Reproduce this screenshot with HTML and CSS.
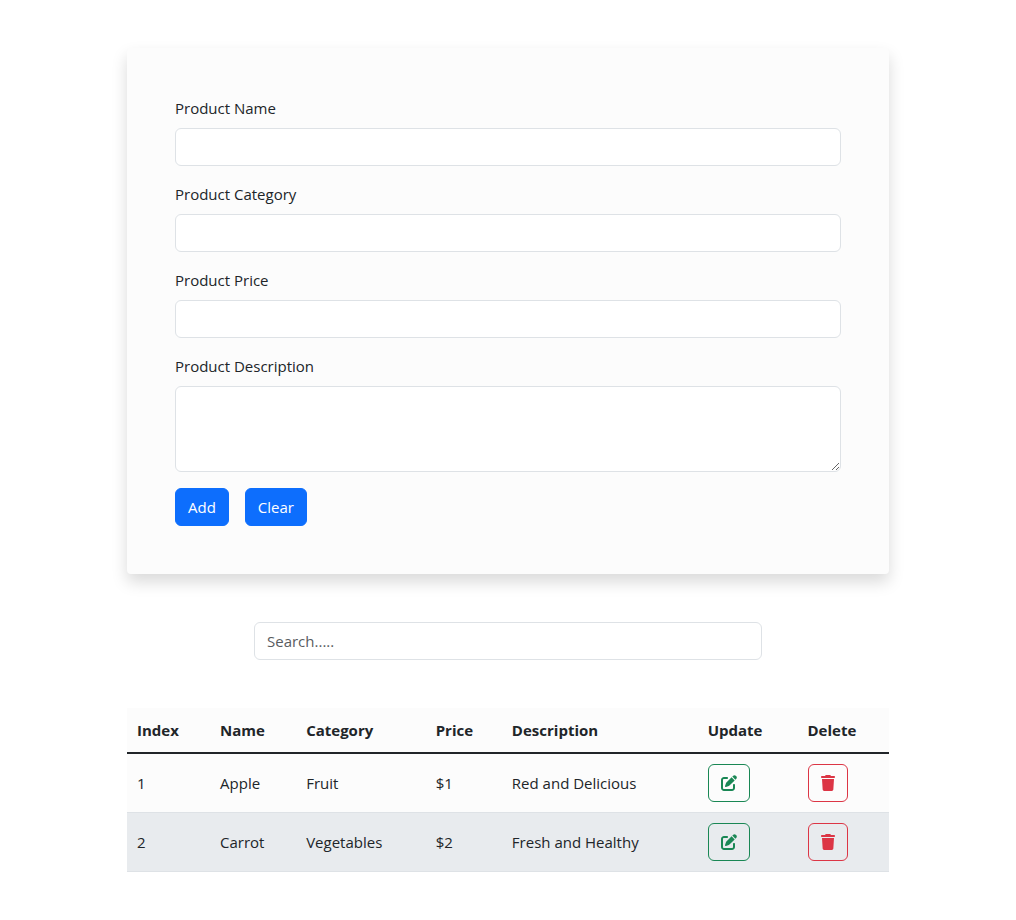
FILE: index.html
```html
<!DOCTYPE html>
<html lang="en">
<head>
  <meta charset="utf-8">
  <meta name="viewport" content="width=device-width, initial-scale=1">
  <title>Products</title>
  <link rel="stylesheet" href="styles.css">
</head>
<body>
  <svg class="sprite" aria-hidden="true">
    <symbol id="icon-edit" viewBox="0 0 512 512">
      <path d="M471.6 21.7c-21.9-21.9-57.3-21.9-79.2 0L362.3 51.7l97.9 97.9 30.1-30.1c21.9-21.9 21.9-57.3 0-79.2L471.6 21.7zm-299.2 220c-6.1 6.1-10.8 13.6-13.5 21.9l-29.6 88.8c-2.9 8.6-.6 18.1 5.8 24.6s15.9 8.7 24.6 5.8l88.8-29.6c8.2-2.7 15.7-7.4 21.9-13.5L437.7 172.3 339.7 74.3 172.4 241.7zM96 64C43 64 0 107 0 160V416c0 53 43 96 96 96H352c53 0 96-43 96-96V320c0-17.7-14.3-32-32-32s-32 14.3-32 32v96c0 17.7-14.3 32-32 32H96c-17.7 0-32-14.3-32-32V160c0-17.7 14.3-32 32-32h96c17.7 0 32-14.3 32-32s-14.3-32-32-32H96z"/>
    </symbol>
    <symbol id="icon-trash" viewBox="0 0 448 512">
      <path d="M135.2 17.7L128 32H32C14.3 32 0 46.3 0 64S14.3 96 32 96H416c17.7 0 32-14.3 32-32s-14.3-32-32-32H320l-7.2-14.3C307.4 6.8 296.3 0 284.2 0H163.8c-12.1 0-23.2 6.8-28.6 17.7zM416 128H32L53.2 467c1.6 25.3 22.6 45 47.9 45H346.9c25.3 0 46.3-19.7 47.9-45L416 128z"/>
    </symbol>
  </svg>

  <main class="page">
    <form class="card">
      <div class="field">
        <label class="label" for="name">Product Name</label>
        <input class="control" id="name" type="text">
      </div>
      <div class="field">
        <label class="label" for="category">Product Category</label>
        <input class="control" id="category" type="text">
      </div>
      <div class="field">
        <label class="label" for="price">Product Price</label>
        <input class="control" id="price" type="text">
      </div>
      <div class="field">
        <label class="label" for="description">Product Description</label>
        <textarea class="control control-area" id="description" rows="3"></textarea>
      </div>
      <div class="actions">
        <button class="btn btn-primary" type="button">Add</button>
        <button class="btn btn-primary" type="button">Clear</button>
      </div>
    </form>

    <div class="search">
      <input class="control" type="search" placeholder="Search....." aria-label="Search products">
    </div>

    <table class="table">
      <colgroup>
        <col class="col-index">
        <col class="col-name">
        <col class="col-category">
        <col class="col-price">
        <col class="col-description">
        <col class="col-update">
        <col class="col-delete">
      </colgroup>
      <thead>
        <tr>
          <th scope="col">Index</th>
          <th scope="col">Name</th>
          <th scope="col">Category</th>
          <th scope="col">Price</th>
          <th scope="col">Description</th>
          <th scope="col">Update</th>
          <th scope="col">Delete</th>
        </tr>
      </thead>
      <tbody>
        <tr>
          <td>1</td>
          <td>Apple</td>
          <td>Fruit</td>
          <td>$1</td>
          <td>Red and Delicious</td>
          <td><button class="btn btn-edit" type="button" aria-label="Update Apple"><svg class="icon" width="16" height="16"><use href="#icon-edit"/></svg></button></td>
          <td><button class="btn btn-delete" type="button" aria-label="Delete Apple"><svg class="icon" width="14" height="16"><use href="#icon-trash"/></svg></button></td>
        </tr>
        <tr class="row-active">
          <td>2</td>
          <td>Carrot</td>
          <td>Vegetables</td>
          <td>$2</td>
          <td>Fresh and Healthy</td>
          <td><button class="btn btn-edit" type="button" aria-label="Update Carrot"><svg class="icon" width="16" height="16"><use href="#icon-edit"/></svg></button></td>
          <td><button class="btn btn-delete" type="button" aria-label="Delete Carrot"><svg class="icon" width="14" height="16"><use href="#icon-trash"/></svg></button></td>
        </tr>
      </tbody>
    </table>
  </main>
</body>
</html>
```

FILE: styles.css
```css
*,
*::before,
*::after {
  box-sizing: border-box;
}

body {
  margin: 0;
  background: #fff;
  color: #212529;
  font-family: "Segoe UI", "Open Sans", "Noto Sans", sans-serif;
  font-size: 15px;
  line-height: 24px;
}

.sprite {
  display: none;
}

.page {
  display: flex;
  flex-direction: column;
  align-items: center;
  gap: 48px;
  padding: 48px 0;
}

.card {
  display: flex;
  flex-direction: column;
  gap: 16px;
  width: 75%;
  padding: 48px;
  border-radius: 4px;
  background: #fcfcfc;
  box-shadow: 0 8px 16px rgba(0, 0, 0, 0.15);
}

.field {
  display: flex;
  flex-direction: column;
  gap: 8px;
}

.control {
  display: block;
  width: 100%;
  margin: 0;
  padding: 6px 12px;
  border: 1px solid #dee2e6;
  border-radius: 6px;
  background: #fff;
  color: inherit;
  font: inherit;
  appearance: none;
}

.control::placeholder {
  color: #595c5f;
  opacity: 1;
}

.control-area {
  resize: vertical;
}

.actions {
  display: flex;
  gap: 16px;
}

.btn {
  display: inline-flex;
  align-items: center;
  justify-content: center;
  height: 38px;
  padding: 6px 12px;
  border: 1px solid transparent;
  border-radius: 6px;
  background: transparent;
  font: inherit;
  cursor: pointer;
}

.btn-primary {
  border-color: #0d6efd;
  background: #0d6efd;
  color: #fff;
}

.btn-edit {
  border-color: #198754;
  color: #198754;
}

.btn-delete {
  border-color: #dc3545;
  color: #dc3545;
}

.icon {
  display: block;
  fill: currentColor;
}

.search {
  width: 50%;
}

.table {
  width: 75%;
  border-collapse: separate;
  border-spacing: 0;
  table-layout: fixed;
  background: #fcfcfc;
}

.table th,
.table td {
  padding: 10px;
  text-align: left;
  vertical-align: middle;
}

.table th {
  border-bottom: 2px solid #212529;
  font-weight: 700;
}

.table td {
  border-bottom: 1px solid #dee2e6;
}

.table td .btn {
  display: flex;
}

.row-active {
  background: #e8ebee;
}

.col-index {
  width: 10.9%;
}

.col-name {
  width: 11.3%;
}

.col-category {
  width: 17%;
}

.col-price {
  width: 10%;
}

.col-description {
  width: 25.7%;
}

.col-update {
  width: 13.1%;
}

.col-delete {
  width: 12%;
}
```
